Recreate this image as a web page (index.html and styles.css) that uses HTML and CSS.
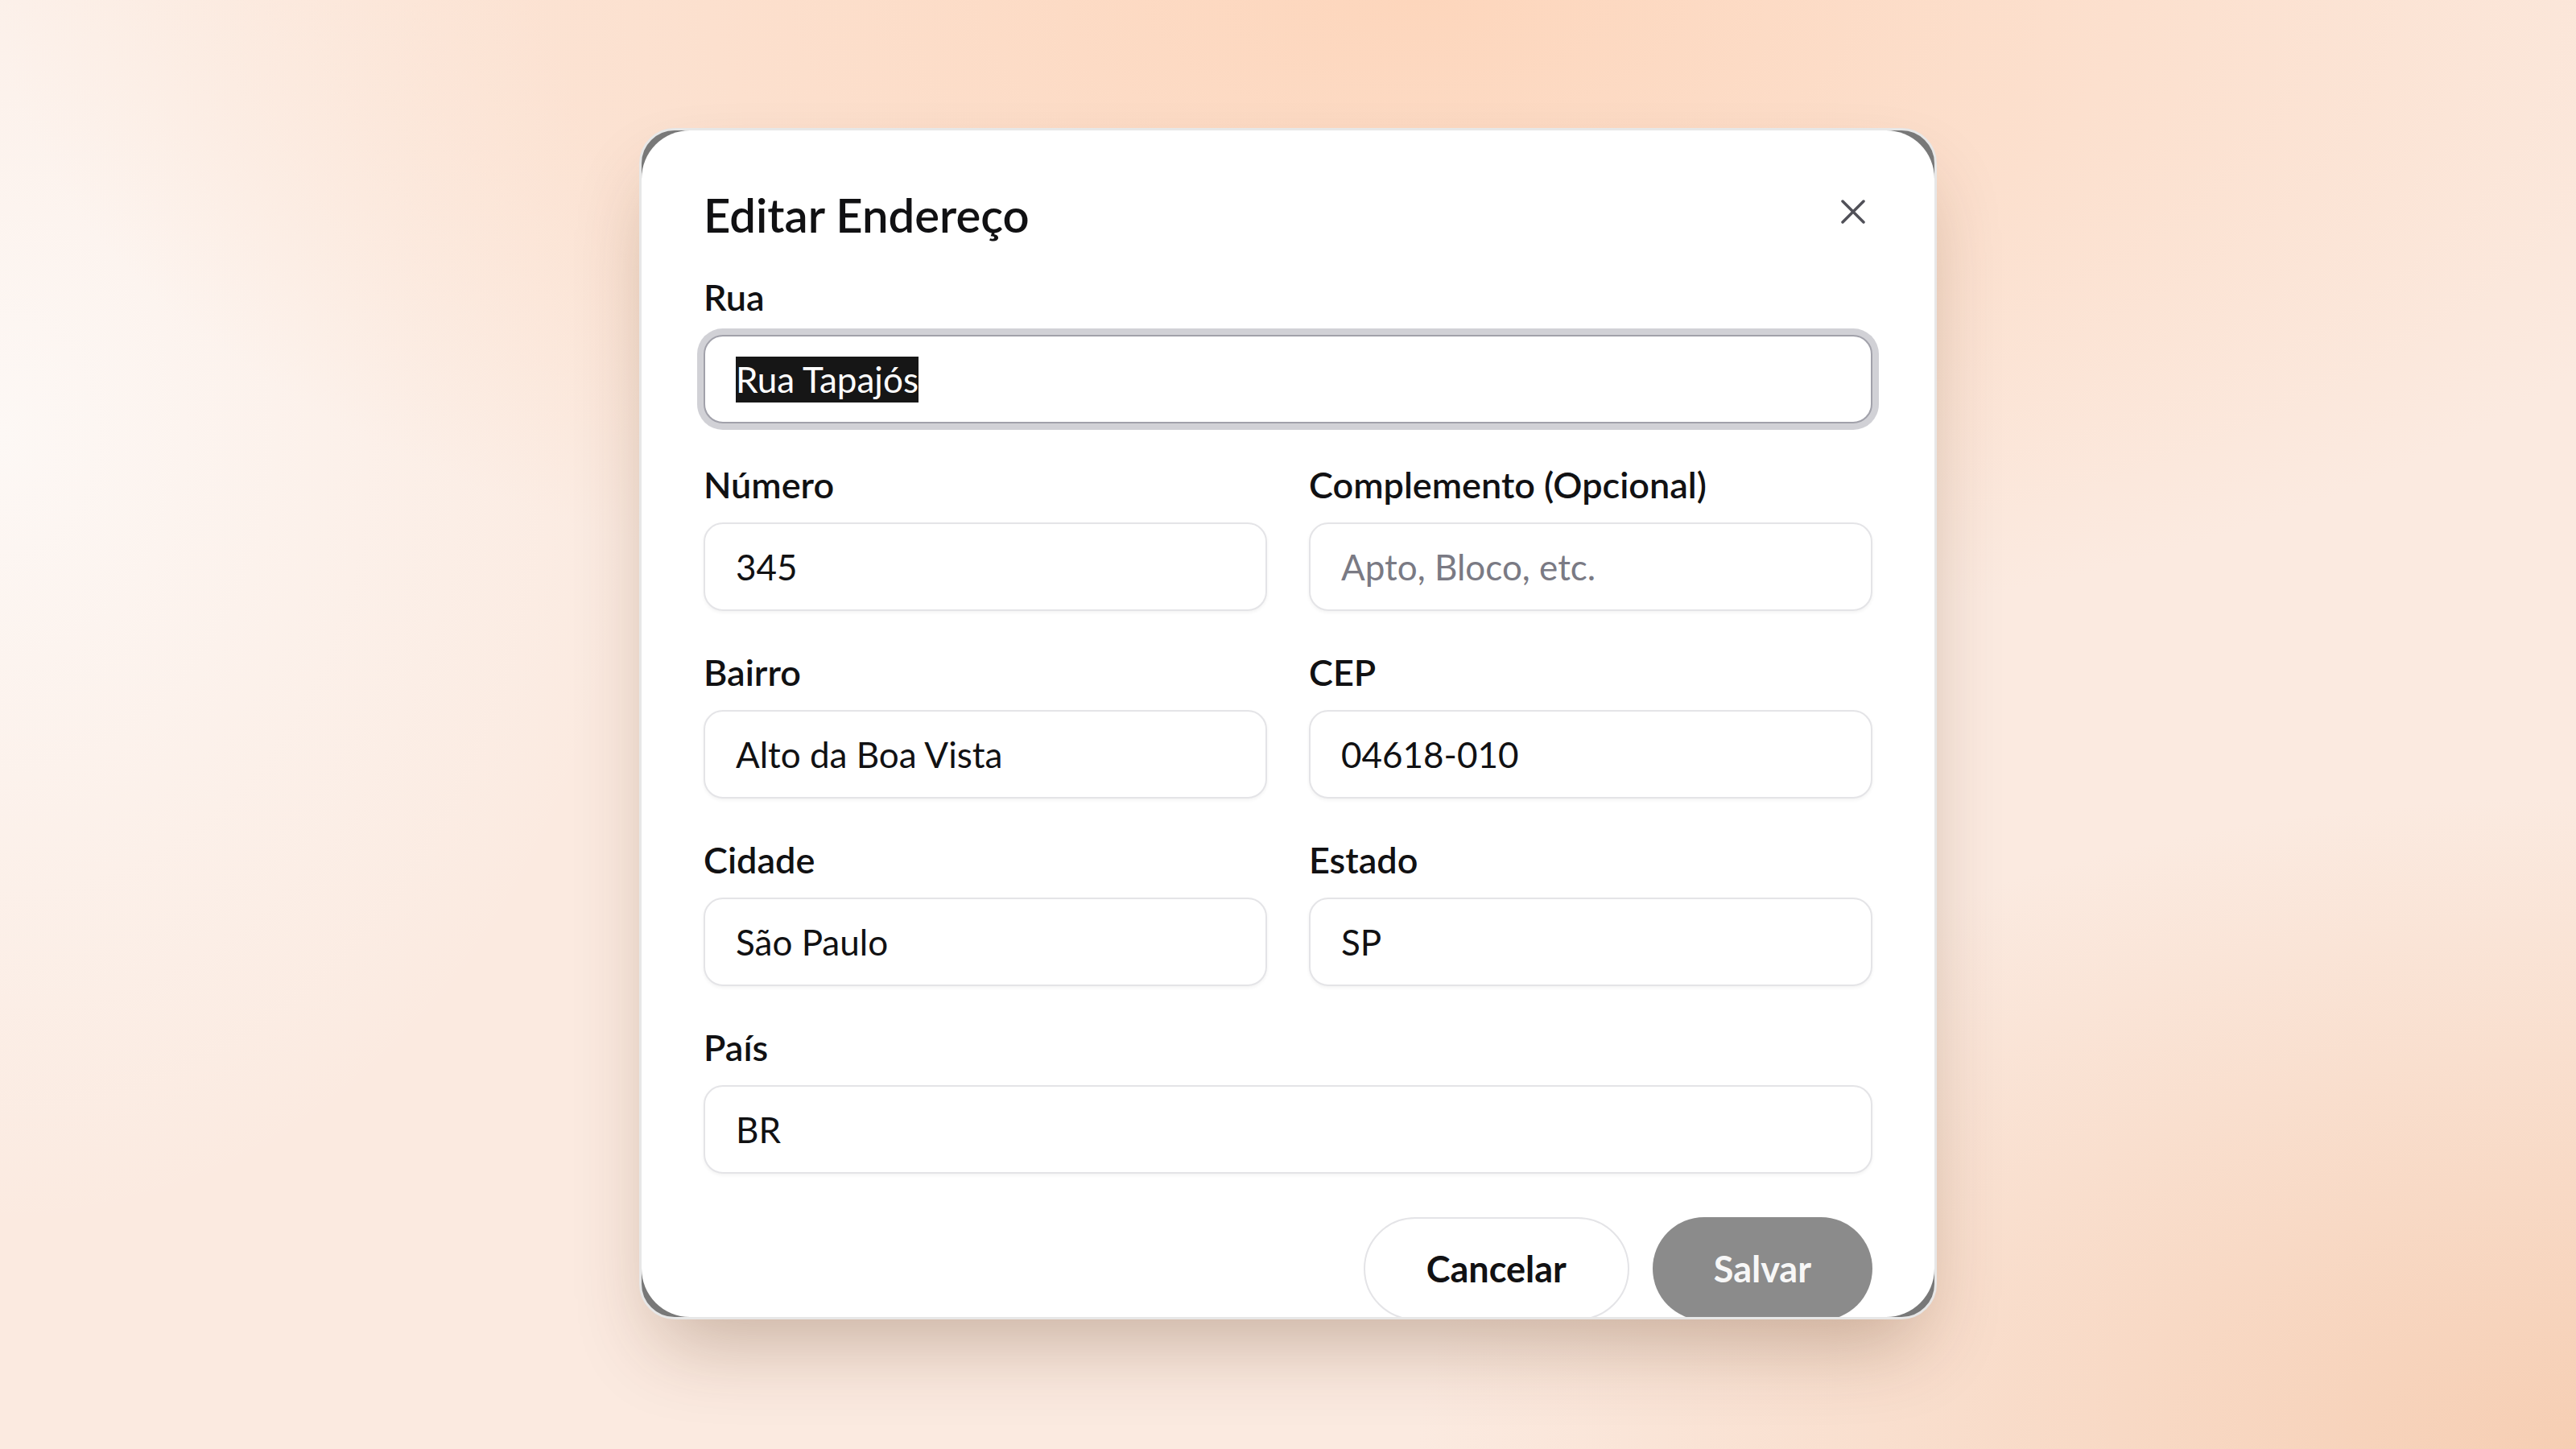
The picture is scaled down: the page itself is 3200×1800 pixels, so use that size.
FILE: index.html
```html
<!DOCTYPE html>
<html lang="pt-BR">
<head>
  <meta charset="UTF-8" />
  <meta name="viewport" content="width=device-width, initial-scale=1.0"/>
  <title>Editar Endereço</title>
  <link rel="stylesheet" href="styles.css">
</head>
<body>
  <div class="modal">
    <div class="modal-inner">
      <div class="modal-header">
        <h2>Editar Endereço</h2>
        <button class="close" type="button" aria-label="Fechar">
          <svg width="32" height="32" viewBox="0 0 32 32" fill="none" stroke="currentColor" stroke-width="3.5" stroke-linecap="round">
            <path d="M3 3 29 29M29 3 3 29"/>
          </svg>
        </button>
      </div>

      <form class="address-form">
        <div class="field full">
          <label>Rua</label>
          <div class="input focused"><span class="selected">Rua Tapajós</span></div>
        </div>

        <div class="field">
          <label for="numero">Número</label>
          <input id="numero" class="input" value="345">
        </div>
        <div class="field">
          <label for="complemento">Complemento (Opcional)</label>
          <input id="complemento" class="input" placeholder="Apto, Bloco, etc.">
        </div>

        <div class="field">
          <label for="bairro">Bairro</label>
          <input id="bairro" class="input" value="Alto da Boa Vista">
        </div>
        <div class="field">
          <label for="cep">CEP</label>
          <input id="cep" class="input" value="04618-010">
        </div>

        <div class="field">
          <label for="cidade">Cidade</label>
          <input id="cidade" class="input" value="São Paulo">
        </div>
        <div class="field">
          <label for="estado">Estado</label>
          <input id="estado" class="input" value="SP">
        </div>

        <div class="field full">
          <label for="pais">País</label>
          <input id="pais" class="input" value="BR">
        </div>

        <div class="actions">
          <button type="button" class="btn btn-outline">Cancelar</button>
          <button type="submit" class="btn btn-primary" disabled>Salvar</button>
        </div>
      </form>
    </div>
  </div>
</body>
</html>
```

FILE: styles.css
```css
:root {
  --text: #111113;
  --muted: #7a7a84;
  --border: #e4e4e7;
  --ring: #d1d1d6;
  --ring-border: #a1a1aa;
  --radius: 24px;
  --font: "Lato", "Noto Sans", sans-serif;
}

body {
  margin: 0;
  height: 1800px;
  display: flex;
  justify-content: center;
  align-items: flex-start;
  padding-top: 159px;
  box-sizing: border-box;
  font-family: var(--font);
  color: var(--text);
  background-color: #fbeae0;
  background-image:
    radial-gradient(ellipse 55% 45% at 55% 0%, #fdd6bc 0%, rgba(253, 214, 188, 0) 100%),
    radial-gradient(ellipse 45% 45% at 100% 100%, #f6ceb3 0%, rgba(246, 206, 179, 0) 100%),
    radial-gradient(ellipse 25% 55% at 0% 30%, #fdf8f5 0%, rgba(253, 248, 245, 0) 100%);
}

.modal {
  width: 1612px;
  height: 1480px;
  box-sizing: border-box;
  border: 3px solid #e7e7e7;
  border-radius: 44px;
  background: #787878;
  overflow: hidden;
  box-shadow: 0 50px 100px -24px rgba(80, 40, 10, 0.3);
}

.modal-inner {
  height: 100%;
  box-sizing: border-box;
  padding: 77px 77px 0;
  background: #fff;
  border-radius: 60px;
}

.modal-header {
  display: flex;
  justify-content: space-between;
  align-items: center;
  height: 56px;
}

.modal-header h2 {
  margin: 0;
  font-size: 58px;
  font-weight: 600;
  line-height: 56px;
}

.close {
  width: 48px;
  height: 48px;
  margin-top: -8px;
  padding: 0;
  border: none;
  background: none;
  color: #505058;
  display: flex;
  align-items: center;
  justify-content: center;
  cursor: pointer;
}

.address-form {
  margin-top: 50px;
  display: grid;
  grid-template-columns: 1fr 1fr;
  gap: 52px;
}

.field {
  display: flex;
  flex-direction: column;
}

.field.full {
  grid-column: 1 / -1;
}

.field label {
  font-size: 45px;
  font-weight: 600;
  line-height: 48px;
  margin-bottom: 23px;
}

.input {
  height: 110px;
  width: 100%;
  box-sizing: border-box;
  padding: 0 38px;
  border: 2px solid var(--border);
  border-radius: var(--radius);
  background: #fff;
  font-family: var(--font);
  font-size: 44px;
  color: var(--text);
  box-shadow: 0 2px 4px rgba(0, 0, 0, 0.05);
  outline: none;
}

.input::placeholder {
  color: var(--muted);
}

.input.focused {
  display: flex;
  align-items: center;
  border-color: var(--ring-border);
  box-shadow: 0 0 0 8px var(--ring);
}

.selected {
  background: #161616;
  color: #fff;
  line-height: 57px;
}

.actions {
  grid-column: 1 / -1;
  margin-top: 2px;
  display: flex;
  justify-content: flex-end;
  gap: 29px;
}

.btn {
  height: 128px;
  padding: 0 76px;
  border-radius: 999px;
  font-family: var(--font);
  font-size: 45px;
  font-weight: 700;
  cursor: pointer;
}

.btn-outline {
  background: #fff;
  border: 2px solid var(--border);
  color: var(--text);
}

.btn-primary {
  background: #8b8b8b;
  border: none;
  color: #f7f7f7;
}
```
